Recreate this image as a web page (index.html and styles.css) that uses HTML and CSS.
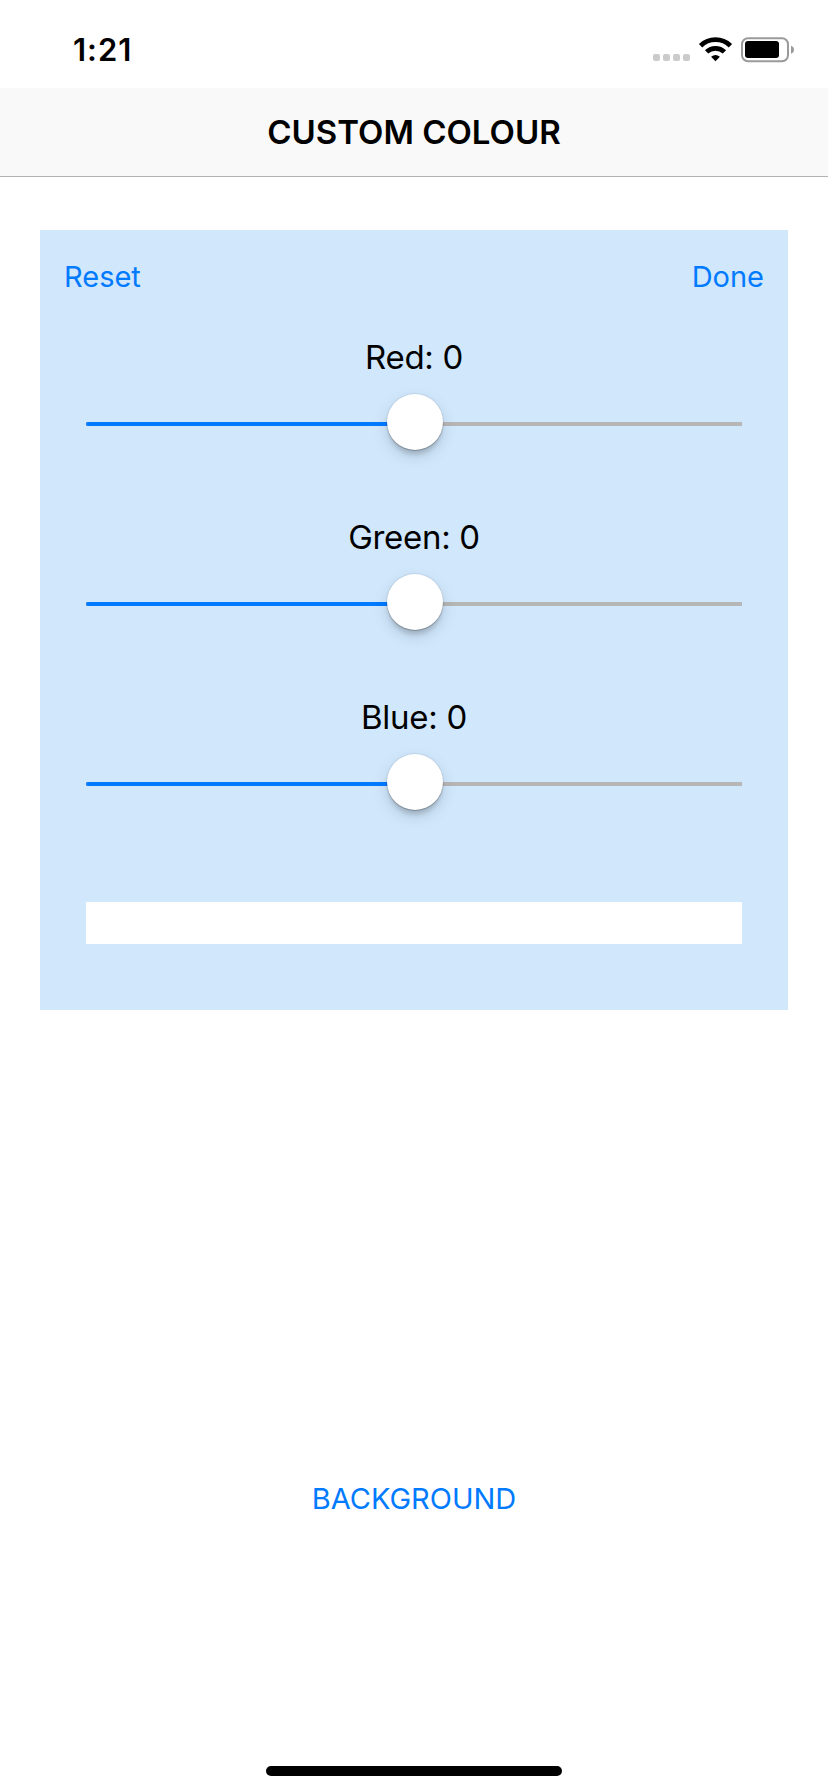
FILE: index.html
```html
<!DOCTYPE html>
<html lang="en">
<head>
<meta charset="utf-8">
<title>Custom Colour</title>
<link rel="stylesheet" href="styles.css">
</head>
<body>
<div class="screen">
  <div class="status">
    <span class="time">1:21</span>
    <svg class="indicators" width="141" height="26" viewBox="0 0 141 26">
      <g fill="#cbcbcb">
        <rect x="0" y="17" width="7" height="7" rx="2"/>
        <rect x="10" y="17" width="7" height="7" rx="2"/>
        <rect x="20" y="17" width="7" height="7" rx="2"/>
        <rect x="30" y="17" width="7" height="7" rx="2"/>
      </g>
      <g fill="none" stroke="#000" stroke-width="4.8">
        <path d="M47.6 8.7A21.5 21.5 0 0 1 77.4 8.7"/>
        <path d="M53.6 14.9A12.8 12.8 0 0 1 71.4 14.9"/>
      </g>
      <path d="M62.5 24.2L58.1 19.8Q62.5 16 66.9 19.8Z"/>
      <rect x="89" y="1.2" width="46" height="23" rx="6" fill="none" stroke="#9a9a9a" stroke-width="2"/>
      <rect x="92" y="4" width="34" height="17" rx="3"/>
      <path d="M138 8.7Q141 9.8 141 12.7T138 16.7Z" fill="#9a9a9a"/>
    </svg>
  </div>
  <header class="nav">CUSTOM COLOUR</header>
  <main class="panel">
    <div class="actions"><span class="reset">Reset</span><span class="done">Done</span></div>
    <section class="channel">
      <div class="label">Red: 0</div>
      <div class="slider"><div class="fill"></div><div class="thumb"></div></div>
    </section>
    <section class="channel">
      <div class="label">Green: 0</div>
      <div class="slider"><div class="fill"></div><div class="thumb"></div></div>
    </section>
    <section class="channel">
      <div class="label">Blue: 0</div>
      <div class="slider"><div class="fill"></div><div class="thumb"></div></div>
    </section>
    <div class="swatch"></div>
  </main>
  <div class="background-button">BACKGROUND</div>
  <div class="home-bar"></div>
</div>
</body>
</html>
```
FILE: styles.css
```css
* { box-sizing: border-box; }
body {
  margin: 0;
  background: #fff;
  color: #000;
  font-family: Inter, "Liberation Sans", sans-serif;
}
.screen {
  width: 828px;
  height: 1792px;
  display: flex;
  flex-direction: column;
  overflow: hidden;
}
.status {
  height: 88px;
  padding: 0 34px 0 73px;
  display: flex;
  justify-content: space-between;
  align-items: flex-start;
}
.time {
  margin-top: 30px;
  line-height: 40px;
  font-size: 31px;
  font-weight: 600;
  letter-spacing: 1px;
}
.indicators { margin-top: 37px; }
.nav {
  height: 89px;
  line-height: 88px;
  background: #f9f9f9;
  border-bottom: 1px solid #b2b2b2;
  text-align: center;
  font-size: 33px;
  font-weight: 600;
}
.panel {
  width: 748px;
  height: 780px;
  margin: 53px 40px 0;
  padding: 26px 24px 0;
  background: #d0e7fc;
}
.actions {
  height: 80px;
  display: flex;
  justify-content: space-between;
  line-height: 41px;
  font-size: 29px;
  color: #007aff;
}
.channel {
  height: 180px;
  margin: 0 22px;
}
.label {
  height: 42px;
  line-height: 42px;
  text-align: center;
  font-size: 33px;
  letter-spacing: -0.3px;
}
.slider {
  height: 56px;
  margin-top: 16px;
  display: grid;
  grid-template-columns: 301px 56px 1fr;
  align-items: center;
  background: linear-gradient(#b6b6b6, #b6b6b6) 0 28px / 100% 4px no-repeat;
}
.fill {
  height: 4px;
  margin: 4px -10px 0 0;
  border-radius: 2px 0 0 2px;
  background: #007aff;
}
.thumb {
  width: 56px;
  height: 56px;
  position: relative;
  border-radius: 50%;
  background: #fff;
  box-shadow: 0 0 0 1px rgba(0, 0, 0, 0.06), 0 1px 1px rgba(0, 0, 0, 0.2), 0 6px 4px -1px rgba(0, 0, 0, 0.13), 0 6px 16px rgba(0, 0, 0, 0.13);
}
.swatch {
  height: 42px;
  margin: 26px 22px 0;
  background: #fff;
}
.background-button {
  margin-top: 468px;
  line-height: 41px;
  text-align: center;
  font-size: 29px;
  color: #007aff;
}
.home-bar {
  width: 296px;
  height: 10px;
  margin: auto auto 16px;
  border-radius: 5px;
  background: #000;
}
```
